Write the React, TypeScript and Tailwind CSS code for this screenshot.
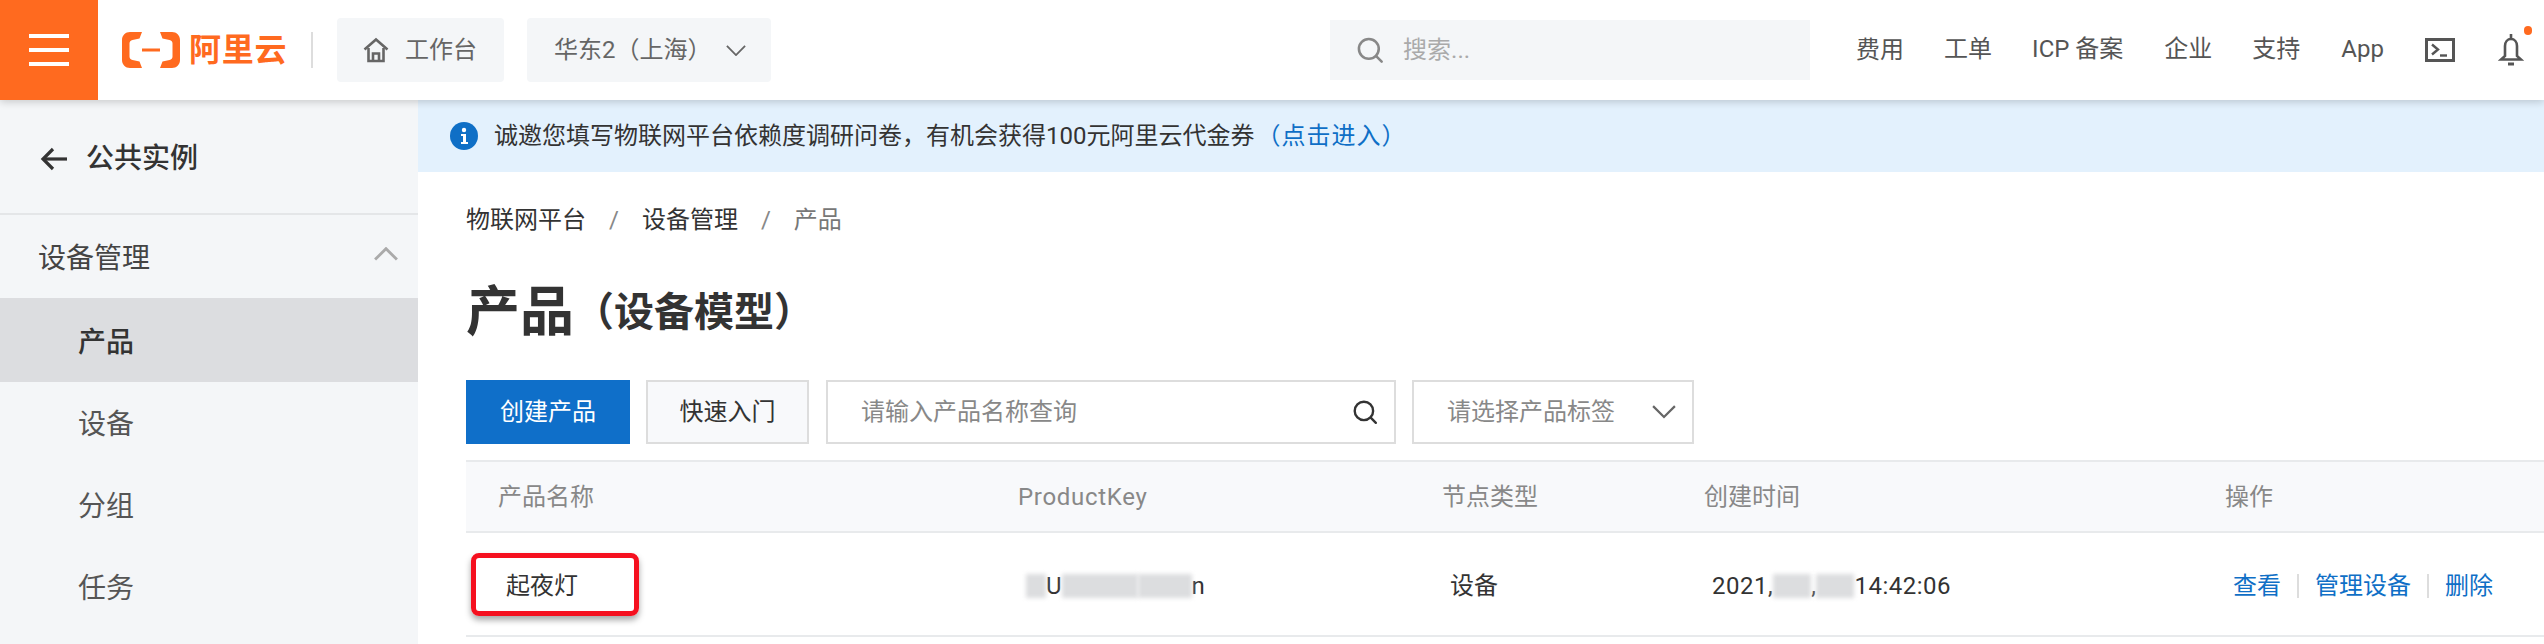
import React from "react";

const font = { fontFamily: '"Roboto","Noto Sans CJK SC",sans-serif' };

function LogoMark() {
  return (
    <svg width="58" height="36" viewBox="0 0 58 36" fill="none">
      <path d="M20 0H8C3.500 0 0 3.500 0 8V28C0 32.500 3.500 36 8 36H20L17.500 29.500L10.500 28C8.500 27.600 7.500 26.500 7.500 24.500V11.500C7.500 9.500 8.500 8.400 10.500 8L17.500 6.500Z" fill="#ff6a1f" />
      <path d="M38 0H50C54.500 0 58 3.500 58 8V28C58 32.500 54.500 36 50 36H38L40.500 29.500L47.500 28C49.500 27.600 50.500 26.500 50.500 24.500V11.500C50.500 9.500 49.500 8.400 47.500 8L40.500 6.500Z" fill="#ff6a1f" />
      <rect x="20" y="16.500" width="18" height="3" fill="#ff6a1f" />
    </svg>
  );
}

function HomeIcon() {
  return (
    <svg width="26" height="26" viewBox="0 0 26 26" fill="none" stroke="#666" strokeWidth="2.600">
      <path d="M1.500 12.500L13 2.500L24.500 12.500" />
      <path d="M5.500 11V24H20.500V11" />
      <path d="M10 24V16.500H16V24" />
    </svg>
  );
}

function SearchIcon({ color, size }: { color: string; size: number }) {
  return (
    <svg width={size} height={size} viewBox="0 0 24 24" fill="none" stroke={color} strokeWidth="2.200" strokeLinecap="round">
      <circle cx="11" cy="11" r="8.500" />
      <path d="M17.500 17.500L22 22" />
    </svg>
  );
}

function Chevron({ size, color, up, stroke = 2 }: { size: number; color: string; up?: boolean; stroke?: number }) {
  return (
    <svg width={size} height={size * 0.55} viewBox="0 0 22 12" fill="none" stroke={color} strokeWidth={stroke}>
      <path d={up ? "M1 11.500L11 1.500L21 11.500" : "M1 1L11 11L21 1"} />
    </svg>
  );
}

function TerminalIcon() {
  return (
    <svg width="30" height="24" viewBox="0 0 30 24" fill="none" stroke="#555" strokeWidth="3">
      <rect x="1.500" y="1.500" width="27" height="21" />
      <path d="M7 6.500L13 11.500L7 16.500" strokeWidth="2.400" />
      <path d="M15 17.500H22" strokeWidth="2.400" />
    </svg>
  );
}

function BellIcon() {
  return (
    <div className="relative flex h-[32px] w-[26px]">
      <svg width="26" height="32" viewBox="0 0 26 32" fill="none" stroke="#555" strokeWidth="2.600">
        <path d="M13 0V5" />
        <path d="M7 22V12C7 8 9.500 5 13 5C16.500 5 19 8 19 12V22L23 25.500H3L7 22Z" />
        <path d="M10 30H16" strokeWidth="3" />
      </svg>
      <span className="absolute right-[-8px] top-[-8px] h-[9px] w-[8px] rounded-full bg-[#ff6a1f]" />
    </div>
  );
}

function NavText({ children }: { children: React.ReactNode }) {
  return <span className="text-[24px] leading-none text-[#555]">{children}</span>;
}

function Header() {
  return (
    <header className="relative z-10 flex h-[100px] shrink-0 items-center bg-white shadow-[0_2px_8px_rgba(0,0,0,0.18)]">
      <div className="flex h-[100px] w-[98px] shrink-0 flex-col items-center justify-center gap-[10px] bg-[#ff6a1f]">
        <span className="h-[4px] w-[40px] bg-white" />
        <span className="h-[4px] w-[40px] bg-white" />
        <span className="h-[4px] w-[40px] bg-white" />
      </div>
      <div className="ml-[24px] flex items-center gap-[9px]">
        <LogoMark />
        <span className="text-[32px] font-bold leading-none tracking-[0.7px] text-[#ff6a1f]">阿里云</span>
      </div>
      <span className="ml-[24px] h-[36px] w-[2px] bg-[#ddd]" />
      <div className="ml-[24px] flex h-[64px] w-[167px] items-center gap-[16px] rounded-[4px] bg-[#f4f6f8] pl-[26px]">
        <HomeIcon />
        <span className="text-[24px] text-[#666]">工作台</span>
      </div>
      <div className="ml-[23px] flex h-[64px] w-[244px] items-center gap-[14px] rounded-[4px] bg-[#f4f6f8] pl-[27px]">
        <span className="text-[24px] text-[#666]">华东2（上海）</span>
        <Chevron size={20} color="#666" />
      </div>
      <div className="ml-[559px] flex h-[60px] w-[480px] items-center gap-[19px] bg-[#f4f6f8] pl-[26px]">
        <SearchIcon color="#888" size={28} />
        <span className="text-[24px] text-[#aaa]">搜索...</span>
      </div>
      <div className="ml-[46px] flex items-center">
        <NavText>费用</NavText>
        <span className="ml-[40px]"><NavText>工单</NavText></span>
        <span className="ml-[40px]"><NavText>ICP 备案</NavText></span>
        <span className="ml-[41px]"><NavText>企业</NavText></span>
        <span className="ml-[40px]"><NavText>支持</NavText></span>
        <span className="ml-[41px]"><NavText>App</NavText></span>
        <span className="ml-[41px] flex"><TerminalIcon /></span>
        <span className="ml-[43px] flex"><BellIcon /></span>
      </div>
    </header>
  );
}

function SideItem({ label, active }: { label: string; active?: boolean }) {
  return (
    <div
      className={
        active
          ? "flex h-[84px] items-center bg-[#dcdde0] pl-[78px] pt-[6px] text-[28px] font-medium text-[#333]"
          : "flex h-[82px] items-center pl-[78px] pt-[4px] text-[28px] text-[#555]"
      }
    >
      {label}
    </div>
  );
}

function Sidebar() {
  return (
    <aside className="flex w-[418px] shrink-0 flex-col bg-[#f4f6f8]">
      <div className="flex h-[115px] items-center gap-[18px] border-b-2 border-[#e4e6e8] pl-[40px] pt-[5px]">
        <svg width="28" height="24" viewBox="0 0 28 24" fill="none" stroke="#333" strokeWidth="3.200">
          <path d="M13 2L3 12L13 22" />
          <path d="M3 12H27" />
        </svg>
        <span className="text-[28px] font-medium text-[#333]">公共实例</span>
      </div>
      <div className="flex h-[83px] items-center justify-between pl-[38px] pr-[20px] pt-[5px]">
        <span className="text-[28px] text-[#444]">设备管理</span>
        <span className="mb-[10px] flex"><Chevron size={24} color="#aaa" up stroke={2.600} /></span>
      </div>
      <SideItem label="产品" active />
      <SideItem label="设备" />
      <SideItem label="分组" />
      <SideItem label="任务" />
    </aside>
  );
}

function Mask({ w }: { w: number }) {
  return <span className="inline-block h-[24px] bg-[#dcdddf] align-middle blur-[2px]" style={{ width: w }} />;
}

const headCell = "text-[24px] text-[#888]";
const rowCols = "grid grid-cols-[552px_424px_262px_521px_1fr]";

function Table() {
  return (
    <div className="mt-[16px]">
      <div className={`${rowCols} h-[73px] items-center border-y-2 border-[#e8eaec] bg-[#f8f9fb]`}>
        <span className={`${headCell} pl-[32px]`}>产品名称</span>
        <span className={`${headCell} tracking-[0.7px]`}>ProductKey</span>
        <span className={headCell}>节点类型</span>
        <span className={headCell}>创建时间</span>
        <span className={headCell}>操作</span>
      </div>
      <div className={`${rowCols} h-[104px] items-center border-b-2 border-[#e8eaec]`}>
        <div className="pl-[5px]">
          <div className="flex h-[63px] w-[168px] items-center rounded-[8px] border-[5px] border-[#f5101f] pl-[30px] pt-[3px] text-[24px] text-[#333] shadow-[0_4px_6px_rgba(0,0,0,0.35)]">
            起夜灯
          </div>
        </div>
        <div className="flex items-center pl-[8px] pt-[3px] text-[24px] text-[#333]">
          <Mask w={20} />
          <span>U</span>
          <Mask w={76} />
          <Mask w={54} />
          <span>n</span>
        </div>
        <span className="pl-[8px] pt-[3px] text-[24px] text-[#333]">设备</span>
        <div className="flex items-center pl-[8px] pt-[3px] text-[24px] tracking-[0.5px] text-[#333]">
          <span>2021,</span>
          <Mask w={38} />
          <span>,</span>
          <Mask w={38} />
          <span>14:42:06</span>
        </div>
        <div className="flex items-center pl-[8px] pt-[3px] text-[24px] text-[#0f6fc6]">
          <span>查看</span>
          <span className="mx-[16px] h-[24px] w-[2px] bg-[#ddd]" />
          <span>管理设备</span>
          <span className="mx-[16px] h-[24px] w-[2px] bg-[#ddd]" />
          <span>删除</span>
        </div>
      </div>
    </div>
  );
}

function Main() {
  return (
    <main className="flex min-w-0 flex-1 flex-col bg-white">
      <div className="flex h-[72px] shrink-0 items-center bg-[#e3f1fd] pl-[32px]">
        <svg width="28" height="28" viewBox="0 0 28 28">
          <circle cx="14" cy="14" r="14" fill="#0f6fc6" />
          <circle cx="14" cy="8" r="2.200" fill="#fff" />
          <path d="M11 12H16V20H18V22H11V20H13V14H11Z" fill="#fff" />
        </svg>
        <span className="ml-[16px] text-[24px] text-[#333]">诚邀您填写物联网平台依赖度调研问卷，有机会获得100元阿里云代金券</span>
        <span className="ml-[2px] text-[24px] tracking-[1px] text-[#0f6fc6]">（点击进入）</span>
      </div>
      <div className="pl-[48px]">
        <div className="mt-[31px] flex h-[34px] items-center text-[24px] text-[#333]">
          <span>物联网平台</span>
          <span className="mx-[23px] text-[#888]">/</span>
          <span>设备管理</span>
          <span className="mx-[23px] text-[#888]">/</span>
          <span className="text-[#777]">产品</span>
        </div>
        <div className="mt-[44px] flex h-[64px] items-center font-bold text-[#333]">
          <span className="text-[54px] leading-none">产品</span>
          <span className="text-[40px] leading-none">（设备模型）</span>
        </div>
        <div className="mt-[35px] flex h-[64px] items-stretch">
          <div className="flex w-[164px] items-center justify-center bg-[#0f6fc9] text-[24px] text-white">创建产品</div>
          <div className="ml-[16px] flex w-[163px] items-center justify-center border-2 border-[#ddd] bg-[#f8f9fb] text-[24px] text-[#333]">快速入门</div>
          <div className="ml-[17px] flex w-[570px] items-center justify-between border-2 border-[#ddd] pl-[33px] pr-[16px]">
            <span className="text-[24px] text-[#888]">请输入产品名称查询</span>
            <SearchIcon color="#333" size={26} />
          </div>
          <div className="ml-[16px] flex w-[282px] items-center justify-between border-2 border-[#ddd] pl-[33px] pr-[16px]">
            <span className="text-[24px] text-[#888]">请选择产品标签</span>
            <Chevron size={24} color="#666" />
          </div>
        </div>
        <Table />
      </div>
    </main>
  );
}

export default function App() {
  return (
    <div className="flex h-[644px] w-[2544px] flex-col overflow-hidden bg-white" style={font}>
      <Header />
      <div className="flex min-h-0 flex-1">
        <Sidebar />
        <Main />
      </div>
    </div>
  );
}
